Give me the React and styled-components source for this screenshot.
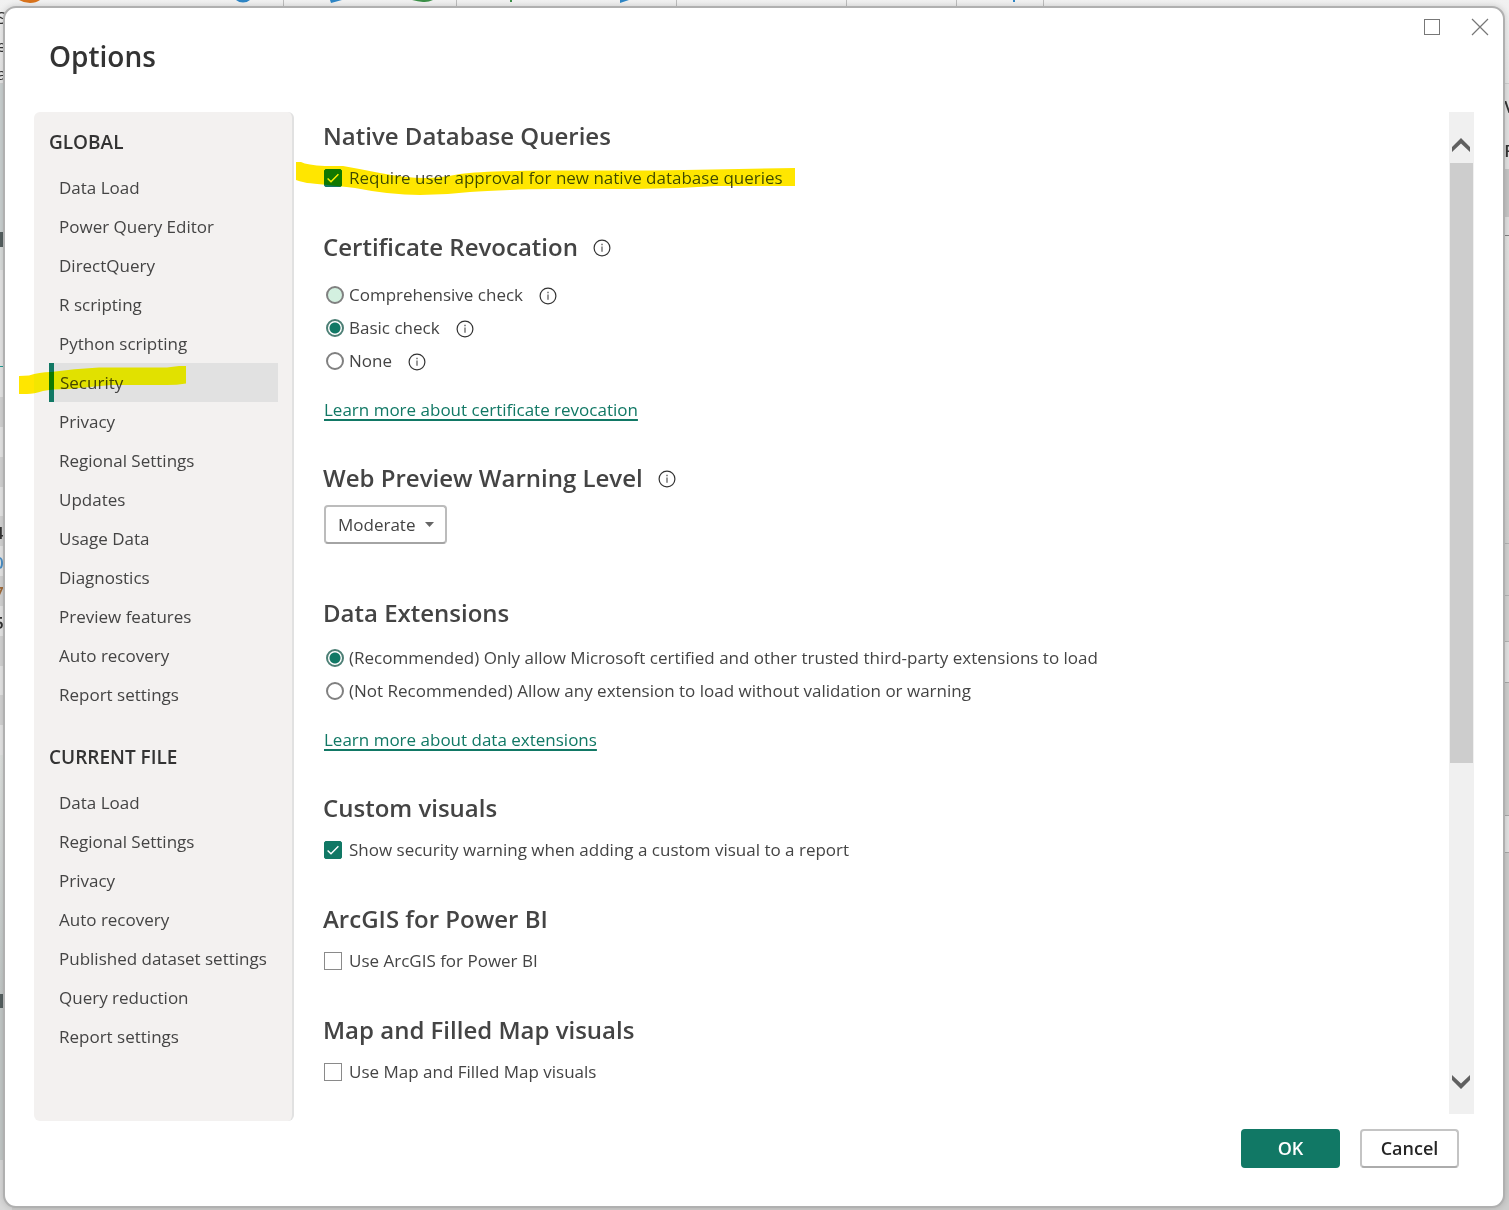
import React from "react";
import styled, { createGlobalStyle, css } from "styled-components";

const GlobalStyle = createGlobalStyle`
  *, *::before, *::after { box-sizing: border-box; }
  html, body { margin: 0; padding: 0; }
  body {
    font-family: "Open Sans", "Noto Sans", sans-serif;
    font-size: 17px;
    line-height: 24px;
    color: #444;
    background: #cdcdcc;
  }
`;

/* ---------- application window behind the dialog ---------- */

const Page = styled.div`
  position: relative;
  display: flex;
  height: 100vh;
  min-height: 700px;
  padding: 6px 4px 2px 3px;
  overflow: hidden;
`;

const Backdrop = styled.div`
  position: absolute;
  inset: 0;
  display: flex;
  flex-direction: column;
  overflow: hidden;
`;

const Ribbon = styled.div`
  position: relative;
  flex: 0 0 84px;
  background: linear-gradient(#f1f1f1, #e6e6e6);
  border-bottom: 1px solid #cfcfcf;
`;

const RibbonArt = styled.svg`
  display: block;
`;

const RibbonText = styled.div`
  position: absolute;
  top: 6px;
  left: -3px;
  display: flex;
  flex-direction: column;
  gap: 4px;
  font-size: 16px;
  line-height: 24px;
  color: #333;
`;

const Workspace = styled.div`
  flex: 1;
  display: flex;
  justify-content: space-between;
  background: #cdcdcc;
`;

const Strip = styled.div`
  display: flex;
  flex-direction: column;
  width: 12px;
`;

const Band = styled.div`
  flex: ${(p) => (p.$h ? `0 0 ${p.$h}px` : "1")};
  background: ${(p) => p.$c};
  overflow: hidden;
  font-size: 17px;
  font-weight: 600;
  line-height: 34px;
  color: ${(p) => p.$ink || "#333"};
  text-indent: -6px;
  white-space: nowrap;
`;

const leftBands = [
  { h: 148, c: "#cbd1d1" },
  { h: 15, c: "#566060" },
  { h: 23, c: "#dadddc" },
  { h: 96, c: "#e6e6e6" },
  { h: 1, c: "#1f9d94" },
  { h: 30, c: "#e6e6e6" },
  { h: 30, c: "#d3d3d3" },
  { h: 30, c: "#e6e6e6" },
  { h: 30, c: "#d3d3d3" },
  { h: 29, c: "#e6e6e6" },
  { h: 30, c: "#d3d3d3", t: "4" },
  { h: 30, c: "#e6e6e6", t: "0.", ink: "#4a90c8" },
  { h: 30, c: "#d3d3d3", t: "7.", ink: "#a06a38" },
  { h: 30, c: "#e6e6e6", t: "5" },
  { h: 30, c: "#d3d3d3" },
  { h: 29, c: "#e6e6e6" },
  { h: 30, c: "#d3d3d3" },
  { h: 30, c: "#e6e6e6" },
  { h: 239, c: "linear-gradient(#dfe2e0, #c3c9c8)" },
  { h: 14, c: "#566060" },
  { h: 152, c: "#c3c9c8" },
  { c: "#d8d8d8" },
];

const rightBands = [
  { h: 6, c: "#e2e2e2" },
  { h: 34, c: "#e2e2e2", t: "V" },
  { h: 10, c: "#e2e2e2" },
  { h: 34, c: "#e2e2e2", t: "F" },
  { h: 1, c: "#e2e2e2" },
  { h: 48, c: "#c6c6c6" },
  { h: 18, c: "#e0e0e0" },
  { h: 1, c: "#808080" },
  { h: 307, c: "linear-gradient(#e2e2e1, #d2d2d1)" },
  { h: 1, c: "#b4b4b4" },
  { h: 51, c: "#d2d2d1" },
  { h: 1, c: "#b4b4b4" },
  { h: 45, c: "#d2d2d1" },
  { h: 1, c: "#b4b4b4" },
  { h: 40, c: "#e2e2e2" },
  { h: 1, c: "#a8a8a8" },
  { h: 132, c: "#cfcfce" },
  { h: 1, c: "#a8a8a8" },
  { h: 36, c: "#e2e2e2" },
  { h: 1, c: "#a8a8a8" },
  { c: "#cdcdcc" },
];

/* ---------- dialog shell ---------- */

const Dialog = styled.section`
  position: relative;
  flex: 1;
  min-width: 0;
  display: flex;
  flex-direction: column;
  background: #fff;
  border: 2px solid #b0b0b0;
  border-radius: 13px;
  box-shadow: 0 0 6px rgba(0, 0, 0, 0.16);
`;

const Header = styled.header`
  flex: 0 0 104px;
  display: flex;
  justify-content: space-between;
  align-items: flex-start;
  padding: 8px 12px 0 44px;
`;

const Title = styled.h1`
  margin: 0;
  padding-top: 22px;
  font-size: 28px;
  font-weight: 600;
  line-height: 36px;
  color: #333;
`;

const WindowButtons = styled.div`
  display: flex;
  gap: 26px;
`;

const WindowButton = styled.button`
  display: grid;
  place-items: center;
  width: 22px;
  height: 22px;
  padding: 0;
  border: 0;
  background: none;
`;

const Body = styled.div`
  flex: 1;
  min-height: 0;
  display: flex;
  padding: 0 29px;
`;

const Footer = styled.footer`
  display: flex;
  justify-content: flex-end;
  gap: 20px;
  padding: 8px 44px 38px;
`;

const ActionButton = styled.button`
  width: 99px;
  height: 39px;
  padding: 0 0 2px;
  border: 2px solid #c4c4c4;
  border-bottom-color: #acacac;
  border-radius: 4px;
  background: #fff;
  color: #252525;
  font: 600 18px/24px "Open Sans", "Noto Sans", sans-serif;
  ${(p) =>
    p.$primary &&
    css`
      background: #117865;
      border-color: #117865;
      color: #fff;
    `}
`;

/* ---------- sidebar ---------- */

const Sidebar = styled.nav`
  flex: 0 0 260px;
  display: flex;
  flex-direction: column;
  gap: 30px;
  padding: 17px 14px 0 15px;
  overflow: hidden;
  background: #f3f1f0;
  border-right: 2px solid #e1e1e1;
  border-radius: 6px;
`;

const GroupTitle = styled.h2`
  margin: 0 0 13px;
  font-size: 19px;
  font-weight: 600;
  line-height: 26px;
  color: #333;
`;

const NavList = styled.ul`
  margin: 0;
  padding: 0;
  list-style: none;
`;

const NavLink = styled.a`
  display: block;
  height: 39px;
  padding-left: ${(p) => (p.$active ? 6 : 10)}px;
  border-left: ${(p) => (p.$active ? "5px solid #117865" : "0")};
  background: ${(p) => (p.$active ? "#e1e1e1" : "transparent")};
  color: #444;
  line-height: 39px;
  text-decoration: none;
  white-space: nowrap;
`;

/* ---------- settings pane ---------- */

const Pane = styled.main`
  flex: 1;
  min-width: 0;
  display: flex;
  flex-direction: column;
  gap: 34px;
  padding: 6px 20px 0 29px;
  overflow: hidden;
`;

const Section = styled.section`
  flex: none;
  padding-bottom: ${(p) => p.$after || 0}px;
`;

const Heading = styled.div`
  display: flex;
  align-items: center;
  gap: 15px;
  margin-bottom: ${(p) => p.$gap}px;
`;

const HeadingText = styled.h2`
  margin: 0;
  font-size: 24px;
  font-weight: 600;
  line-height: 36px;
  color: #444;
`;

const Row = styled.div`
  display: flex;
  align-items: center;
  gap: 16px;
  height: 33px;
`;

const OptionLabel = styled.label`
  display: flex;
  align-items: center;
  gap: ${(p) => p.$gap}px;
  white-space: nowrap;
`;

const CheckWrap = styled.span`
  display: grid;
  margin-left: 1px;
  > * { grid-area: 1 / 1; }
`;

const CheckInput = styled.input`
  appearance: none;
  width: 18px;
  height: 18px;
  margin: 0;
  border: 1px solid #8a8a8a;
  background: #fff;
  &:checked {
    background: #117865;
    border-color: #117865;
    border-radius: 2px;
  }
`;

const Tick = styled.svg`
  pointer-events: none;
`;

const RadioInput = styled.input`
  appearance: none;
  width: 18px;
  height: 18px;
  margin: 0 0 0 3px;
  border: 2px solid #808080;
  border-radius: 50%;
  background: ${(p) => (p.$hover ? "#d3f0e0" : "#fff")};
  &:checked {
    border-color: #4d7f75;
    background: radial-gradient(circle, #117865 0 5px, #fff 6px);
  }
`;

const InfoIcon = styled.svg`
  flex: none;
  margin-top: 2px;
`;

const LinkRow = styled.div`
  display: flex;
  align-items: center;
  height: 33px;
  margin-top: 16px;
`;

const TextLink = styled.a`
  margin-left: 1px;
  color: #117865;
  text-decoration: underline 2px;
  text-underline-offset: 3px;
  text-decoration-skip-ink: none;
`;

const SelectWrap = styled.div`
  display: inline-grid;
  align-items: center;
  margin-left: 1px;
  > * { grid-area: 1 / 1; }
`;

const Select = styled.select`
  appearance: none;
  width: 123px;
  height: 39px;
  padding: 0 28px 0 12px;
  border: 2px solid #bcbcbc;
  border-bottom-color: #a4a4a4;
  border-radius: 4px;
  background: #fff;
  color: #444;
  font: 400 17px/24px "Open Sans", "Noto Sans", sans-serif;
`;

const SelectArrow = styled.svg`
  justify-self: end;
  margin-right: 13px;
  pointer-events: none;
`;

/* ---------- scroll bar ---------- */

const ScrollBar = styled.div`
  flex: 0 0 25px;
  display: flex;
  flex-direction: column;
  margin-bottom: 7px;
  padding: 0 1px;
  background: #f0f0f0;
`;

const ScrollButton = styled.button`
  display: grid;
  justify-content: start;
  align-content: center;
  height: ${(p) => p.$h}px;
  padding: ${(p) => (p.$up ? "14px" : "0")} 0 0 2px;
  border: 0;
  background: none;
`;

const ScrollTrack = styled.div`
  flex: 1;
`;

const ScrollThumb = styled.div`
  height: 67.6%;
  background: #cdcdcd;
`;

/* ---------- highlighter strokes ---------- */

const Marker = styled.svg`
  position: absolute;
  left: ${(p) => p.$x}px;
  top: ${(p) => p.$y}px;
  mix-blend-mode: darken;
  pointer-events: none;
`;

const globalItems = [
  "Data Load",
  "Power Query Editor",
  "DirectQuery",
  "R scripting",
  "Python scripting",
  "Security",
  "Privacy",
  "Regional Settings",
  "Updates",
  "Usage Data",
  "Diagnostics",
  "Preview features",
  "Auto recovery",
  "Report settings",
];

const fileItems = [
  "Data Load",
  "Regional Settings",
  "Privacy",
  "Auto recovery",
  "Published dataset settings",
  "Query reduction",
  "Report settings",
];

function NavGroup({ title, items, active }) {
  return (
    <div>
      <GroupTitle>{title}</GroupTitle>
      <NavList>
        {items.map((item) => (
          <li key={item}>
            <NavLink
              href="#"
              $active={item === active}
              aria-current={item === active ? "page" : undefined}
            >
              {item}
            </NavLink>
          </li>
        ))}
      </NavList>
    </div>
  );
}

function Info() {
  return (
    <InfoIcon width="18" height="18" viewBox="0 0 18 18" aria-hidden="true">
      <circle cx="9" cy="9" r="7.9" fill="none" stroke="#333" strokeWidth="1.2" />
      <path d="M9 7.6v5.2" stroke="#444" strokeWidth="1.1" />
      <path d="M9 4.8v1.4" stroke="#444" strokeWidth="1.2" />
    </InfoIcon>
  );
}

function Check({ id, label, checked }) {
  return (
    <Row>
      <OptionLabel htmlFor={id} $gap={7}>
        <CheckWrap>
          <CheckInput type="checkbox" id={id} defaultChecked={checked} />
          {checked && (
            <Tick width="18" height="18" viewBox="0 0 18 18" aria-hidden="true">
              <path d="M3.6 9.4l3.4 3.3 7.4-7.4" fill="none" stroke="#fff" strokeWidth="1.4" />
            </Tick>
          )}
        </CheckWrap>
        {label}
      </OptionLabel>
    </Row>
  );
}

function Radio({ name, id, label, checked, hover, info }) {
  return (
    <Row>
      <OptionLabel htmlFor={id} $gap={5}>
        <RadioInput type="radio" name={name} id={id} defaultChecked={checked} $hover={hover} />
        {label}
      </OptionLabel>
      {info && <Info />}
    </Row>
  );
}

export default function App() {
  return (
    <Page>
      <GlobalStyle />
      <Backdrop aria-hidden="true">
        <Ribbon>
          <RibbonArt width="1100" height="6" viewBox="0 0 1100 6">
            <path d="M19 0h21q-4 3-10 3t-11-3z" fill="#d9731c" />
            <path d="M236 0h14q-3 2.5-7 2.5t-7-2.5z" fill="#2f86c6" />
            <path d="M330 0h12l-11 3z" fill="#2f86c6" />
            <path d="M412 0h21q-5 2.5-10 2t-11-2z" fill="#3c9048" />
            <path d="M510 0h2v2h-2z" fill="#3c9048" />
            <path d="M620 0h9l-9 3z" fill="#2f86c6" />
            <path d="M1013 0h2v2h-2z" fill="#2f86c6" />
            <path d="M283.5 0v6M456.5 0v6M676.5 0v6M846.5 0v6M956.5 0v6M1043.5 0v6" stroke="#bdbdbd" />
          </RibbonArt>
          <RibbonText>
            <span>S</span>
            <span>e</span>
            <span>at</span>
          </RibbonText>
        </Ribbon>
        <Workspace>
          <Strip>
            {leftBands.map((b, i) => (
              <Band key={i} $h={b.h} $c={b.c} $ink={b.ink}>{b.t}</Band>
            ))}
          </Strip>
          <Strip>
            {rightBands.map((b, i) => (
              <Band key={i} $h={b.h} $c={b.c}>{b.t && <>&nbsp;&nbsp;&nbsp;{b.t}</>}</Band>
            ))}
          </Strip>
        </Workspace>
      </Backdrop>

      <Dialog role="dialog" aria-labelledby="options-title">
        <Header>
          <Title id="options-title">Options</Title>
          <WindowButtons>
            <WindowButton aria-label="Maximize">
              <svg width="18" height="18" viewBox="0 0 18 18">
                <rect x="1.5" y="1.5" width="15" height="15" fill="none" stroke="#777" />
              </svg>
            </WindowButton>
            <WindowButton aria-label="Close">
              <svg width="18" height="18" viewBox="0 0 18 18">
                <path d="M1 1l16 16M17 1L1 17" stroke="#777" strokeWidth="1.2" />
              </svg>
            </WindowButton>
          </WindowButtons>
        </Header>

        <Body>
          <Sidebar aria-label="Option categories">
            <NavGroup title="GLOBAL" items={globalItems} active="Security" />
            <NavGroup title="CURRENT FILE" items={fileItems} />
          </Sidebar>

          <Pane>
            <Section $after={1}>
              <Heading $gap={7}><HeadingText>Native Database Queries</HeadingText></Heading>
              <Check id="native" label="Require user approval for new native database queries" checked />
            </Section>

            <Section>
              <Heading $gap={13}>
                <HeadingText>Certificate Revocation</HeadingText>
                <Info />
              </Heading>
              <Radio name="cert" id="cert-full" label="Comprehensive check" hover info />
              <Radio name="cert" id="cert-basic" label="Basic check" checked info />
              <Radio name="cert" id="cert-none" label="None" info />
              <LinkRow><TextLink href="#">Learn more about certificate revocation</TextLink></LinkRow>
            </Section>

            <Section $after={17}>
              <Heading $gap={9}>
                <HeadingText id="warning-level">Web Preview Warning Level</HeadingText>
                <Info />
              </Heading>
              <SelectWrap>
                <Select aria-labelledby="warning-level" defaultValue="Moderate">
                  <option>Moderate</option>
                </Select>
                <SelectArrow width="9" height="5" viewBox="0 0 9 5" aria-hidden="true">
                  <path d="M0 0h9L4.500 5z" fill="#666" />
                </SelectArrow>
              </SelectWrap>
            </Section>

            <Section>
              <Heading $gap={10}><HeadingText>Data Extensions</HeadingText></Heading>
              <Radio
                name="ext"
                id="ext-certified"
                label="(Recommended) Only allow Microsoft certified and other trusted third-party extensions to load"
                checked
              />
              <Radio
                name="ext"
                id="ext-any"
                label="(Not Recommended) Allow any extension to load without validation or warning"
              />
              <LinkRow><TextLink href="#">Learn more about data extensions</TextLink></LinkRow>
            </Section>

            <Section $after={1}>
              <Heading $gap={7}><HeadingText>Custom visuals</HeadingText></Heading>
              <Check id="visuals" label="Show security warning when adding a custom visual to a report" checked />
            </Section>

            <Section $after={1}>
              <Heading $gap={7}><HeadingText>ArcGIS for Power BI</HeadingText></Heading>
              <Check id="arcgis" label="Use ArcGIS for Power BI" />
            </Section>

            <Section $after={1}>
              <Heading $gap={7}><HeadingText>Map and Filled Map visuals</HeadingText></Heading>
              <Check id="maps" label="Use Map and Filled Map visuals" />
            </Section>
          </Pane>

          <ScrollBar>
            <ScrollButton $h={51} $up aria-label="Scroll up">
              <svg width="18" height="14" viewBox="0 0 18 14">
                <path d="M9 0l9 9v5L9 5.500 0 14V9z" fill="#606060" />
              </svg>
            </ScrollButton>
            <ScrollTrack><ScrollThumb /></ScrollTrack>
            <ScrollButton $h={64} aria-label="Scroll down">
              <svg width="18" height="14" viewBox="0 0 18 14">
                <path d="M9 14l9-9V0L9 8.500 0 0v5z" fill="#606060" />
              </svg>
            </ScrollButton>
          </ScrollBar>
        </Body>

        <Footer>
          <ActionButton $primary>OK</ActionButton>
          <ActionButton>Cancel</ActionButton>
        </Footer>

        <Marker $x={14} $y={357} width="168" height="30" viewBox="0 0 168 30" aria-hidden="true">
          <path
            d="M0 11L10 10.500Q20 7 32 7Q55 3.500 80 2.500H148L160 1H167V18.500Q158 20 148 20H92Q70 22 50 24Q32 24 24 26Q15 29 8 29H0z"
            fill="#ffe600"
          />
        </Marker>
        <Marker $x={290} $y={153} width="502" height="35" viewBox="0 0 502 35" aria-hidden="true">
          <path
            d="M1 1H6Q12 4 30 5H48Q65 8 85 12Q110 17 130 17Q145 17 165 13Q190 10 250 9.500H360Q440 8 500 7V25H420Q380 28 340 28H260Q230 28 215 29Q190 30 175 31Q150 34 125 34Q95 34 60 27Q25 23 12 22Q3 20 1 19z"
            fill="#ffe600"
          />
        </Marker>
      </Dialog>
    </Page>
  );
}
